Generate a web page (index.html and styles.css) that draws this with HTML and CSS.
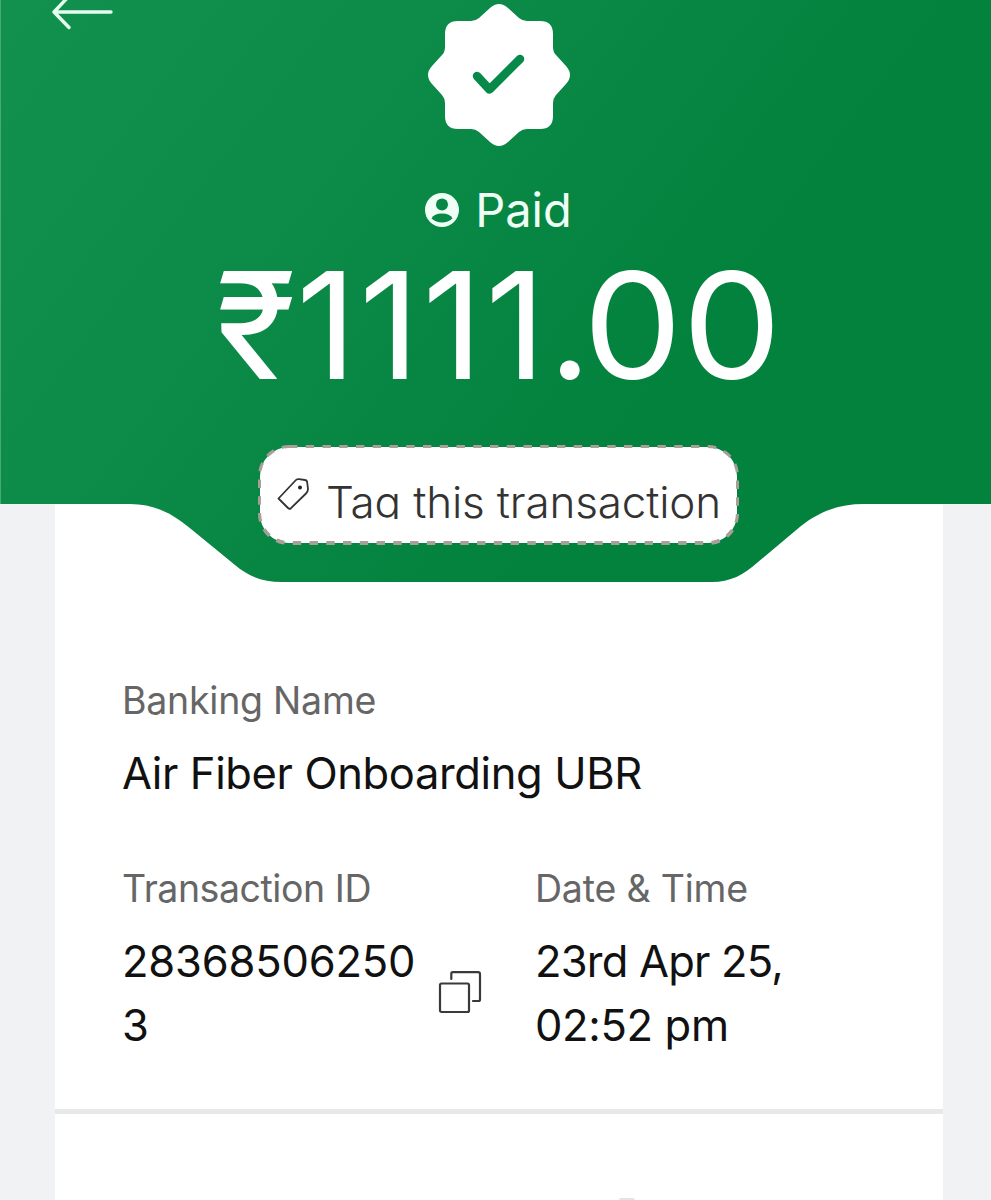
FILE: index.html
```html
<!DOCTYPE html>
<html lang="en">
<head>
<meta charset="utf-8">
<title>Payment receipt</title>
<link rel="stylesheet" href="styles.css">
</head>
<body>
<main class="screen">
  <header class="hero">
    <svg class="hero-shape" width="991" height="583" viewBox="0 0 991 583" aria-hidden="true">
      <defs>
        <linearGradient id="green" gradientUnits="userSpaceOnUse" x1="0" y1="0" x2="600" y2="460">
          <stop offset="0" stop-color="#12904e"/>
          <stop offset="0.5" stop-color="#0b8a48"/>
          <stop offset="1" stop-color="#03823e"/>
        </linearGradient>
      </defs>
      <path fill="url(#green)" d="M0 0H991V504H864C840 504 820 511 801 526L758 562C744 575 730 582 712 582H282C262 582 248 576 235 565L191 529C172 513 154 504 130 504H0Z"/>
      <path fill="#46a875" d="M0 0H1V504H0Z"/>
    </svg>
    <svg class="back" width="64" height="32" viewBox="0 0 64 32" fill="none" stroke="#e4fff0" stroke-width="3.4" stroke-linecap="round" stroke-linejoin="round">
      <path d="M61 12H4M20-5L4 12L19 27.500"/>
    </svg>
    <svg class="badge" width="142" height="142" viewBox="0 0 142 142">
      <path fill="#fff" d="M62 4Q71-4 80 4L91 14Q94.500 17 99 17H112Q125 17 125 30V43Q125 48 128 51L138 62Q146 71 138 80L128 91Q125 94.500 125 99V112Q125 125 112 125H99Q94.500 125 91 128L80 138Q71 146 62 138L51 128Q47.500 125 43 125H30Q17 125 17 112V99Q17 94.500 14 91L4 80Q-4 71 4 62L14 51Q17 48 17 43V30Q17 17 30 17H43Q47.500 17 51 14Z"/>
      <path d="M49 72L61.500 85.500L92 55" fill="none" stroke="#07894a" stroke-width="8.500" stroke-linecap="round" stroke-linejoin="round"/>
    </svg>
    <div class="status">
      <svg width="34" height="34" viewBox="0 0 34 34">
        <circle cx="17" cy="17" r="17" fill="#effff5"/>
        <circle cx="17" cy="11.500" r="6" fill="#078846"/>
        <path d="M6.500 25.500Q9 20.500 17 20.500T27.500 25.500Q23 29.500 17 29.500T6.500 25.500Z" fill="#078846"/>
      </svg>
      <span class="status-text">Paid</span>
    </div>
    <div class="amount"><span class="rupee">₹</span><span class="ones">1111</span><span class="dot">.</span><span class="zeros">00</span></div>
    <div class="tag">
      <svg class="tag-outline" width="481" height="100" viewBox="0 0 481 100">
        <rect x="2" y="2" width="477" height="96" rx="29" fill="#fff" stroke="#a79f98" stroke-width="4" stroke-dasharray="8.400 8.350"/>
        <rect x="3" y="3" width="475" height="93" rx="28" fill="#fff"/>
      </svg>
      <svg class="tag-icon" width="32" height="34" viewBox="0 0 32 34" fill="none" stroke="#333" stroke-width="1.800" stroke-linejoin="round">
        <path d="M1.500 21.500L18 4Q19.500 2 22 2.200L28 3Q30 3.200 30.200 5.500L31 12Q31 14.500 29 16.500L14 31.200Q12.500 32.500 11 31Z"/>
        <circle cx="23" cy="10.500" r="2" fill="#222" stroke="none"/>
      </svg>
      <span class="tag-text">Tag this transaction</span>
    </div>
  </header>
  <section class="card">
    <div class="details">
      <div class="label bank-label">Banking Name</div>
      <div class="value bank-value">Air Fiber Onboarding UBR</div>
      <div class="columns">
        <div>
          <div class="label id-label">Transaction ID</div>
          <div class="id-row">
            <div class="value id-value">28368506250<br>3</div>
            <svg class="copy" width="44" height="44" viewBox="0 0 44 44" fill="none" stroke="#3a3a3a" stroke-width="2.200" stroke-linecap="round" stroke-linejoin="round">
              <rect x="2" y="13.500" width="29" height="28.500" rx="1.500"/>
              <path d="M13.300 9V3.700Q13.300 2.200 14.800 2.200H40Q42 2.200 42 4.200V29.500Q42 31 40.500 31H35"/>
            </svg>
          </div>
        </div>
        <div>
          <div class="label date-label">Date &amp; Time</div>
          <div class="value date-value">23rd Apr 25,<br><span class="time">02:52 pm</span></div>
        </div>
      </div>
    </div>
    <div class="next"><span class="peek"></span></div>
  </section>
</main>
</body>
</html>
```

FILE: styles.css
```css
* { box-sizing: border-box; }
body { margin: 0; background: #f0f2f4; font-family: Inter, "Open Sans", sans-serif; }
.screen { width: 991px; height: 1200px; overflow: hidden; }
.hero {
  position: relative;
  z-index: 1;
  height: 504px;
  display: flex;
  flex-direction: column;
  align-items: center;
  padding: 4px 0 0 6px;
}
.hero > * { position: relative; flex: none; }
.hero .hero-shape { position: absolute; left: 0; top: 0; }
.hero .back { position: absolute; left: 50px; top: 0; }
.badge { display: block; }
.status { display: flex; align-items: center; gap: 16px; height: 60px; margin-top: 34px; color: #effff5; }
.status svg { display: block; }
.status-text { font-size: 47px; line-height: 60px; font-weight: 400; }
.amount {
  height: 150px;
  margin-top: 11px;
  margin-left: -11px;
  line-height: 150px;
  font-size: 148px;
  font-weight: 400;
  color: #fff;
  white-space: nowrap;
}
.ones { letter-spacing: 2.900px; }
.dot { letter-spacing: -8px; }
.zeros { display: inline-block; transform: scaleX(1.063); transform-origin: left; }
.tag { width: 481px; height: 100px; margin-top: 44px; display: flex; align-items: center; padding-left: 19px; }
.hero .tag-outline { position: absolute; left: 0; top: 0; }
.tag-icon { position: relative; margin-bottom: 3px; }
.tag-text {
  position: relative;
  height: 48px;
  margin-left: 17px;
  overflow: hidden;
  font-size: 44px;
  line-height: 62px;
  font-weight: 300;
  letter-spacing: -0.150px;
  color: #333;
  white-space: nowrap;
}
.card { width: 888px; margin-left: 55px; background: #fff; }
.details { height: 610px; padding: 172px 0 0 67px; border-bottom: 5px solid #e8e8e8; }
.label { height: 50px; font-size: 37.500px; line-height: 50px; color: #666; white-space: nowrap; }
.bank-label { letter-spacing: -0.250px; }
.id-label { letter-spacing: -0.450px; }
.date-label { letter-spacing: -0.200px; }
.value { font-size: 43.500px; line-height: 64px; color: #111; white-space: nowrap; }
.bank-value { height: 64px; margin-top: 15px; letter-spacing: -0.380px; }
.columns { display: grid; grid-template-columns: 413px 1fr; margin-top: 59px; }
.id-row { display: flex; align-items: flex-start; }
.id-value { width: 316px; margin-top: 15px; letter-spacing: -0.200px; }
.copy { margin-top: 56px; }
.date-value { margin-top: 15px; letter-spacing: -0.800px; }
.time { letter-spacing: -0.350px; }
.next { height: 86px; display: flex; align-items: flex-end; padding-left: 564px; }
.peek { width: 16px; height: 2px; border-radius: 8px 8px 0 0; background: #e4e4e4; }
```
